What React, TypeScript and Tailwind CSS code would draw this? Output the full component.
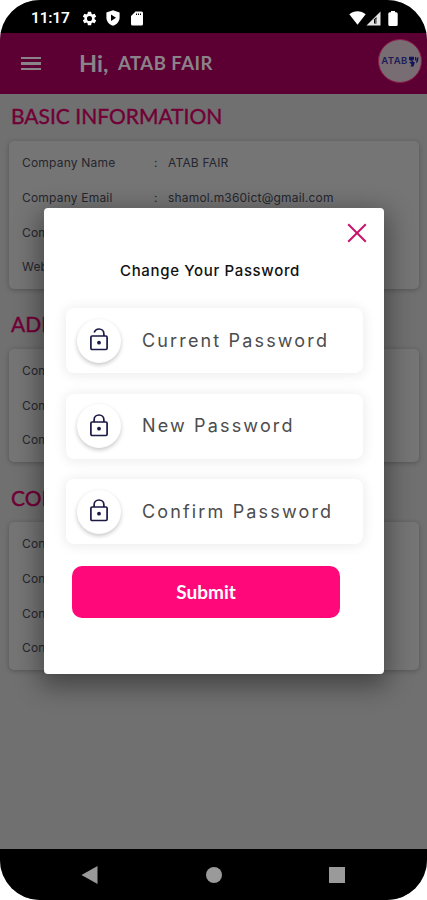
import React from 'react';

const basicInfo = [
  { label: 'Company Name', value: 'ATAB FAIR' },
  { label: 'Company Email', value: 'shamol.m360ict@gmail.com' },
  { label: 'Company Phone', value: '' },
  { label: 'Website', value: '' },
];

const addressInfo = [
  { label: 'Company City', value: '' },
  { label: 'Company Area', value: '' },
  { label: 'Company Road', value: '' },
];

const contactInfo = [
  { label: 'Contact Name', value: '' },
  { label: 'Contact Role', value: '' },
  { label: 'Contact Email', value: '' },
  { label: 'Contact Phone', value: '' },
];

const StatusBar = () => (
  <div className="h-[33px] bg-black flex items-center justify-between pl-[31px] pr-[29px] pt-[3px] text-white">
    <div className="flex items-center">
      <span className="w-[50px] font-[Roboto,sans-serif] font-semibold text-[15.5px] leading-none tracking-[-0.2px] pt-px">11:17</span>
      <svg className="w-[17px] h-[17px]" viewBox="0 0 24 24" fill="currentColor">
        <path d="M19.14 12.94a7.5 7.5 0 0 0 0-1.88l2.03-1.58a.5.5 0 0 0 .12-.61l-1.92-3.32a.5.5 0 0 0-.59-.22l-2.39.96a7 7 0 0 0-1.62-.94l-.36-2.54a.5.5 0 0 0-.48-.41h-3.84a.5.5 0 0 0-.47.41l-.36 2.54a7 7 0 0 0-1.62.94l-2.39-.96a.5.5 0 0 0-.59.22L2.74 8.87a.5.5 0 0 0 .12.61l2.03 1.58a7.5 7.5 0 0 0 0 1.88l-2.03 1.58a.5.5 0 0 0-.12.61l1.92 3.32c.12.22.37.29.59.22l2.39-.96c.5.38 1.03.7 1.62.94l.36 2.54c.05.24.24.41.48.41h3.84c.24 0 .44-.17.47-.41l.36-2.54a7 7 0 0 0 1.62-.94l2.39.96c.22.08.47 0 .59-.22l1.92-3.32a.5.5 0 0 0-.12-.61zM12 15.6a3.6 3.6 0 1 1 0-7.2 3.6 3.6 0 0 1 0 7.2z" />
      </svg>
      <svg className="w-[14px] h-[16px] ml-[8px]" viewBox="0 0 14 16" fill="currentColor">
        <path fillRule="evenodd" d="M7 .3 13.6 2.6v5c0 4-2.8 7-6.6 8.2C3.2 14.6.4 11.6.4 7.6v-5zM5 4.5v6.4l5-3.2z" />
      </svg>
      <svg className="w-[12px] h-[15px] ml-[11px]" viewBox="0 0 12 15" fill="currentColor">
        <path fillRule="evenodd" d="M4.5.5h6A1.5 1.5 0 0 1 12 2v11a1.5 1.5 0 0 1-1.5 1.5h-9A1.5 1.5 0 0 1 0 13V5zM5 2.5v1.5h1V2.5zm2 0v1.500h1V2.500zm2 0v1.500h1V2.500z" />
      </svg>
    </div>
    <div className="flex items-center">
      <svg className="w-[17px] h-[14px]" viewBox="0 0 17 14" fill="currentColor">
        <path d="M.3 3.2C5-.9 12-.9 16.7 3.2L8.5 13.7z" />
      </svg>
      <svg className="w-[15px] h-[15px]" viewBox="0 0 15 15">
        <path d="M14.5.5v14H.5z" fill="#e4e4e4" />
        <path d="M10.5 6v6.5H8V8.5z" fill="#000" />
        <path d="M9.9 8v4" stroke="#ccc" strokeWidth=".8" />
      </svg>
      <svg className="w-[10px] h-[15px] ml-[7px]" viewBox="0 0 10 15" fill="currentColor">
        <path d="M3 0h4v1.3h1.2A1.5 1.5 0 0 1 9.7 2.8v10.7A1.5 1.5 0 0 1 8.2 15H1.8A1.5 1.5 0 0 1 .3 13.5V2.8a1.5 1.5 0 0 1 1.5-1.5H3z" />
      </svg>
    </div>
  </div>
);

const Header = () => (
  <div className="h-[61px] bg-[#5c0034] flex items-center pl-[21px] pr-[5px] text-[#8a8388]">
    <div className="w-[58px] flex flex-col gap-[3px]">
      <span className="w-[20px] h-[2.5px] bg-current" />
      <span className="w-[20px] h-[2.5px] bg-current" />
      <span className="w-[20px] h-[2.5px] bg-current" />
    </div>
    <span className="w-[39px] text-[23.5px] font-bold leading-none">Hi,</span>
    <span className="text-[18.5px] font-bold leading-none whitespace-nowrap tracking-[0.5px]">ATAB FAIR</span>
    <div className="ml-auto mb-[5px] w-[44px] h-[44px] rounded-full border border-[#8e1d49] bg-[#776d72] flex items-center justify-center">
      <span className="text-[9.5px] font-semibold text-[#1b1c58] leading-none tracking-[0.5px] font-[Inter,sans-serif]">ATAB</span>
      <svg className="w-[11px] h-[11px]" viewBox="0 0 11 11" fill="#10145c">
        <path d="M1 .8h5v2.700L4 5 1 4zM1 6.500 4.500 5l2.300 1.500L5.500 10.500H2.500L3.500 8z" />
        <path d="M7 1h1.300v3.500H7zM9 2 10.500.8 10 5.500 8 7.500z" />
      </svg>
    </div>
  </div>
);

type InfoCardProps = {
  rows: { label: string; value: string }[];
};

const InfoCard = ({ rows }: InfoCardProps) => (
  <div className="ml-[9px] mr-[8px] rounded-[5px] bg-[#757575] shadow-[0_1px_5px_rgba(0,0,0,0.25)] pt-[5px] pb-[4px] pl-[13px]">
    {rows.map((row) => (
      <div key={row.label} className="h-[34.7px] flex items-center font-[Inter,sans-serif] text-[12px] text-[#26262e] whitespace-nowrap">
        <span className="w-[132px] tracking-[0.2px]">{row.label}</span>
        {row.value && <span className="w-[14px]">:</span>}
        {row.value && <span className="tracking-[0.2px]">{row.value}</span>}
      </div>
    ))}
  </div>
);

const LockIcon = ({ open }: { open?: boolean }) => (
  <svg className="w-[20px] h-[24px]" viewBox="0 0 20 24" fill="none" stroke="#1b1945" strokeWidth="1.7">
    <rect x="1.9" y="9" width="16.2" height="13.5" rx="1.2" />
    <path d={open ? 'M5.2 5.5C6 3.3 7.7 2 10 2c2.8 0 4.9 2 4.9 4.9V9' : 'M5.1 9V6.9C5.1 4 7.2 2 10 2s4.9 2 4.9 4.9V9'} />
    <circle cx="10" cy="15.7" r="1.9" fill="#1b1945" stroke="none" />
  </svg>
);

type PasswordFieldProps = {
  label: string;
  open?: boolean;
};

const PasswordField = ({ label, open }: PasswordFieldProps) => (
  <div className="h-[65px] rounded-[8px] bg-white shadow-[0_1px_12px_2px_rgba(0,0,0,0.07)] flex items-center pl-[11px]">
    <div className="w-[44px] h-[44px] rounded-full bg-white shadow-[0_2px_4px_rgba(0,0,0,0.22)] flex items-center justify-center pb-[3px]">
      <LockIcon open={open} />
    </div>
    <span className="ml-[21px] font-[Inter,sans-serif] text-[18px] text-[#4c4c4c] tracking-[2.15px] leading-none whitespace-nowrap">{label}</span>
  </div>
);

const PasswordDialog = () => (
  <div className="absolute left-[44px] top-[208px] w-[340px] h-[466px] rounded-[4px] bg-white shadow-[0_8px_26px_4px_rgba(0,0,0,0.4)] flex flex-col">
    <div className="h-[50px] flex items-center justify-end pr-[17px]">
      <svg className="w-[20px] h-[20px]" viewBox="0 0 20 20" stroke="#c6156a" strokeWidth="2">
        <path d="M1.2 1.2l17.6 17.6M18.8 1.2L1.2 18.8" />
      </svg>
    </div>
    <h2 className="h-[26px] flex items-center justify-center font-[Inter,sans-serif] text-[15px] font-medium tracking-[0.65px] text-[#111] pr-[8px] whitespace-nowrap">
      Change Your Password
    </h2>
    <div className="mt-[24px] ml-[22px] w-[297px] flex flex-col gap-[20.5px]">
      <PasswordField label="Current Password" open />
      <PasswordField label="New Password" />
      <PasswordField label="Confirm Password" />
    </div>
    <button className="mt-[22px] ml-[28px] w-[268px] h-[52px] rounded-[10px] bg-[#ff0879] text-white text-[19px] font-bold">
      Submit
    </button>
  </div>
);

const NavBar = () => (
  <div className="h-[51px] bg-black flex items-center justify-between pl-[81px] pr-[82px]">
    <svg className="w-[17px] h-[18px]" viewBox="0 0 17 18" fill="#9a9a9a">
      <path d="M.5 9 16.5 0v18z" />
    </svg>
    <span className="w-[16px] h-[16px] rounded-full bg-[#9a9a9a]" />
    <span className="w-[16px] h-[16px] bg-[#9a9a9a]" />
  </div>
);

const App = () => {
  return (
    <div className="w-[427px] h-[900px] bg-white font-[Lato,sans-serif]">
      <div className="relative w-full h-full rounded-[40px] overflow-hidden bg-[#707070] flex flex-col">
        <StatusBar />
        <Header />
        <div className="flex-1">
          <h3 className="h-[47px] pb-[4px] pl-[11px] flex items-center text-[21px] text-[#720037] [-webkit-text-stroke:0.4px] whitespace-nowrap">BASIC INFORMATION</h3>
          <InfoCard rows={basicInfo} />
          <h3 className="h-[60px] pt-[9px] pl-[11px] flex items-center text-[21px] text-[#720037] [-webkit-text-stroke:0.4px] whitespace-nowrap">ADDRESS</h3>
          <InfoCard rows={addressInfo} />
          <h3 className="h-[60px] pt-[11px] pl-[11px] flex items-center text-[21px] text-[#720037] [-webkit-text-stroke:0.4px] whitespace-nowrap">CONTACT</h3>
          <InfoCard rows={contactInfo} />
        </div>
        <NavBar />
        <PasswordDialog />
      </div>
    </div>
  );
};

export default App;
